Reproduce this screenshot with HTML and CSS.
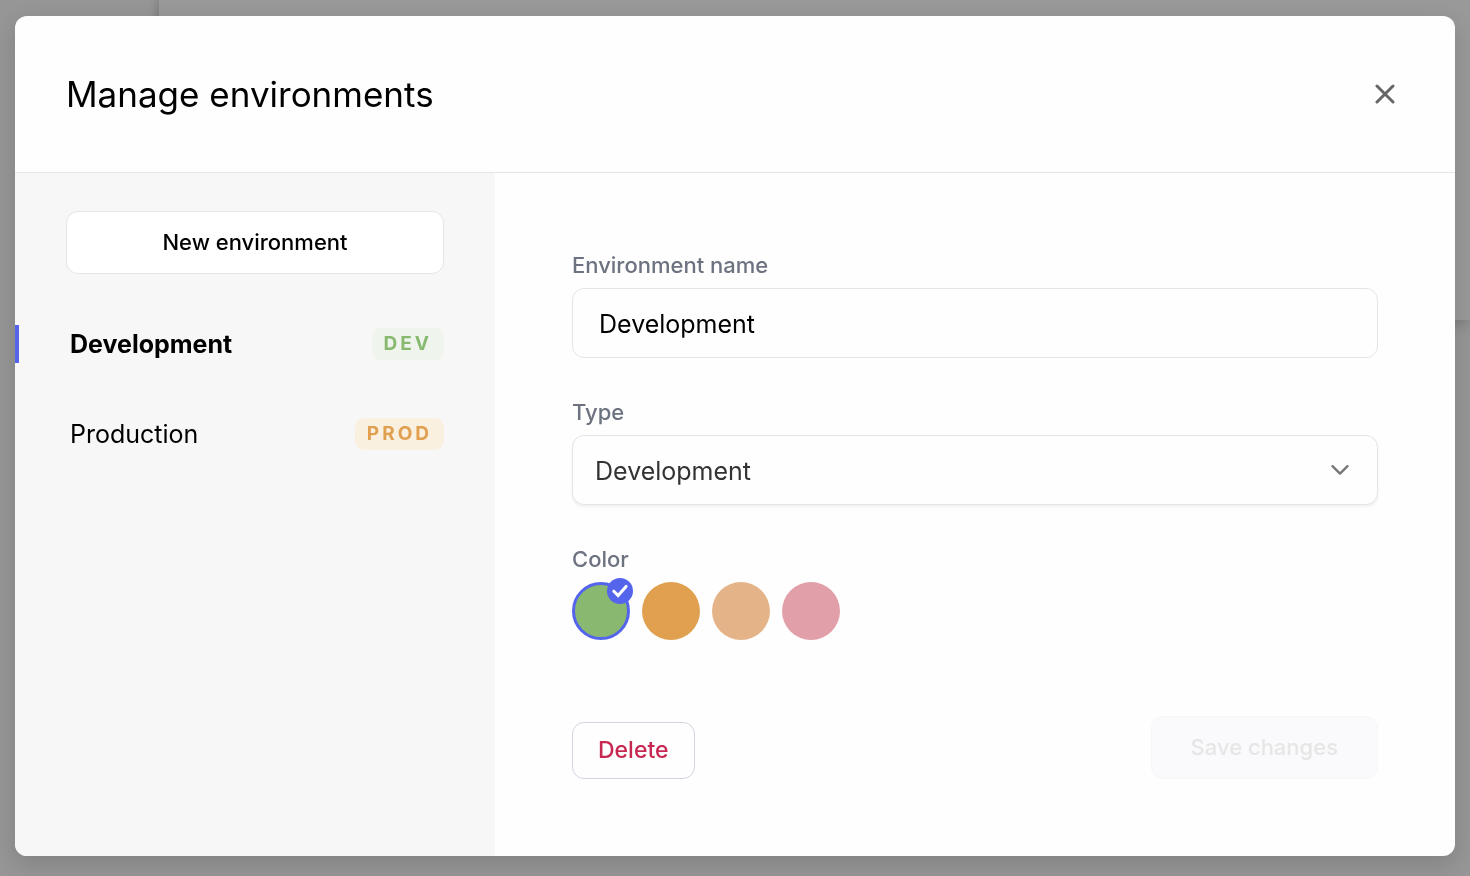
FILE: index.html
```html
<!DOCTYPE html>
<html lang="en">
<head>
  <meta charset="utf-8">
  <meta name="viewport" content="width=device-width, initial-scale=1">
  <title>Manage environments</title>
  <link rel="stylesheet" href="styles.css">
</head>
<body>
  <div class="page" aria-hidden="true">
    <div class="page-nav"></div>
    <div class="page-panel"></div>
  </div>
  <div class="overlay">
    <section class="modal" role="dialog" aria-modal="true" aria-labelledby="title">
      <header class="modal-header">
        <h1 class="title" id="title">Manage environments</h1>
        <button class="close" type="button" aria-label="Close">
          <svg viewBox="0 0 20 20" width="20" height="20" fill="none" stroke="currentColor" stroke-width="3" stroke-linecap="round"><path d="M2 2l16 16M18 2L2 18"/></svg>
        </button>
      </header>
      <div class="modal-body">
        <aside class="sidebar">
          <button class="button button-new" type="button">New environment</button>
          <nav class="env-list" aria-label="Environments">
            <a class="env env-active" href="#development" aria-current="true"><span>Development</span><span class="badge badge-dev">DEV</span></a>
            <a class="env" href="#production"><span>Production</span><span class="badge badge-prod">PROD</span></a>
          </nav>
        </aside>
        <form class="form">
          <div class="field">
            <label class="label" for="name">Environment name</label>
            <input class="control" id="name" type="text" value="Development">
          </div>
          <div class="field">
            <label class="label" for="type">Type</label>
            <div class="select-wrap">
              <select class="control control-select" id="type">
                <option>Development</option>
                <option>Production</option>
              </select>
              <svg class="chevron" viewBox="0 0 20 12" width="20" height="12" fill="none" stroke="currentColor" stroke-width="2.4" stroke-linecap="round" stroke-linejoin="round"><path d="M2.5 2.2L10 9.6l7.500-7.400"/></svg>
            </div>
          </div>
          <fieldset class="field colors">
            <legend class="label">Color</legend>
            <div class="swatches">
              <label class="swatch">
                <input class="swatch-input green" type="radio" name="color" aria-label="Green" checked>
                <svg class="check" viewBox="0 0 26 26" width="26" height="26" fill="none"><circle cx="13" cy="13" r="13" fill="#5465ec"/><path d="M6.800 13.200l4.300 4.400 8-9.200" stroke="#fff" stroke-width="3" stroke-linecap="round"/></svg>
              </label>
              <label class="swatch"><input class="swatch-input orange" type="radio" name="color" aria-label="Orange"></label>
              <label class="swatch"><input class="swatch-input peach" type="radio" name="color" aria-label="Peach"></label>
              <label class="swatch"><input class="swatch-input pink" type="radio" name="color" aria-label="Pink"></label>
            </div>
          </fieldset>
          <div class="actions">
            <button class="button button-delete" type="button">Delete</button>
            <button class="button button-save" type="submit" disabled>Save changes</button>
          </div>
        </form>
      </div>
    </section>
  </div>
</body>
</html>
```
FILE: styles.css
```css
* {
  box-sizing: border-box;
}

body {
  margin: 0;
  background: #969696;
  color: #000;
  font-family: Inter, "Liberation Sans", sans-serif;
}

button,
input,
select {
  margin: 0;
  font-family: inherit;
}

.page {
  position: fixed;
  inset: 0;
  display: grid;
  grid-template-columns: 159px 1fr;
  align-items: start;
}

.page-nav {
  height: 320px;
  background: linear-gradient(to right, #969696 95%, #8d8d8d);
}

.page-panel {
  height: 320px;
  background: #999;
  box-shadow: 0 4px 12px rgba(0, 0, 0, 0.16);
}

.overlay {
  position: relative;
  display: flex;
  min-height: 100vh;
  padding: 16px 15px 20px;
}

.modal {
  flex: 1;
  display: flex;
  flex-direction: column;
  overflow: hidden;
  border-radius: 12px;
  background: #fefefe;
  box-shadow: 0 8px 24px rgba(0, 0, 0, 0.14);
}

.modal-header {
  display: flex;
  align-items: center;
  justify-content: space-between;
  padding: 52px 51px;
  border-bottom: 1px solid #e5e5e5;
}

.title {
  margin: 0;
  font-size: 35px;
  font-weight: 400;
  line-height: 52px;
}

.close {
  display: flex;
  padding: 9px;
  border: 0;
  background: none;
  color: #666;
}

.modal-body {
  flex: 1;
  display: grid;
  grid-template-columns: 1fr 2fr;
}

.sidebar {
  padding: 38px 51px;
  background: #f7f7f7;
}

.button {
  border: 1px solid #e5e5e5;
  border-radius: 12px;
  background: #fff;
  font-size: 22px;
  font-weight: 500;
  line-height: 29px;
}

.button-new {
  width: 100%;
  padding: 16px;
  color: #000;
}

.env-list {
  display: grid;
  gap: 52px;
  margin: 51px -51px 0;
}

.env {
  display: flex;
  align-items: center;
  justify-content: space-between;
  padding: 0 51px;
  border-left: 4px solid transparent;
  color: #000;
  font-size: 25px;
  line-height: 38px;
  text-decoration: none;
}

.env-active {
  border-left-color: #5465ec;
  font-weight: 700;
}

.badge {
  padding: 0 12px;
  border-radius: 9px;
  font-size: 19px;
  font-weight: 700;
  line-height: 32px;
  letter-spacing: 3px;
}

.badge-dev {
  background: #eff4ec;
  color: #89b971;
}

.badge-prod {
  background: #faf0e0;
  color: #e0a050;
}

.form {
  display: flex;
  flex-direction: column;
  gap: 40px;
  padding: 78px 77px 77px;
}

.field {
  display: flex;
  flex-direction: column;
  gap: 8px;
}

.label {
  color: #6d7280;
  font-size: 22px;
  font-weight: 500;
  line-height: 29px;
}

.control {
  width: 100%;
  height: 70px;
  padding: 2px 26px 0;
  border: 1px solid #e5e5e5;
  border-radius: 12px;
  background: #fefefe;
  color: #000;
  font-size: 25px;
}

.select-wrap {
  position: relative;
}

.control-select {
  display: block;
  appearance: none;
  padding: 2px 22px 0;
  color: #333;
  box-shadow: 0 2px 3px rgba(0, 0, 0, 0.06);
}

.chevron {
  position: absolute;
  top: 29px;
  right: 28px;
  color: #777;
  pointer-events: none;
}

.colors {
  margin: 0;
  padding: 0;
  border: 0;
}

.colors .label {
  padding: 0;
}

.swatches {
  display: flex;
  gap: 12px;
  margin-top: 8px;
}

.swatch {
  position: relative;
  display: flex;
}

.swatch-input {
  width: 58px;
  height: 58px;
  border-radius: 50%;
  appearance: none;
}

.swatch-input:checked {
  border: 3px solid #5465ec;
}

.green { background: #89b971; }
.orange { background: #e0a050; }
.peach { background: #e5b388; }
.pink { background: #e19fa9; }

.check {
  position: absolute;
  top: -4px;
  right: -3px;
}

.actions {
  display: flex;
  align-items: flex-end;
  justify-content: space-between;
  margin-top: 36px;
}

.button-delete {
  padding: 13px 25px;
  border-color: #d1d5e0;
  background: #fefefe;
  color: #c72852;
  font-size: 23px;
}

.button-save {
  padding: 16px 39px;
  border-color: #f7f7f9;
  background: #fafafc;
  color: #e6e6e6;
}
```
